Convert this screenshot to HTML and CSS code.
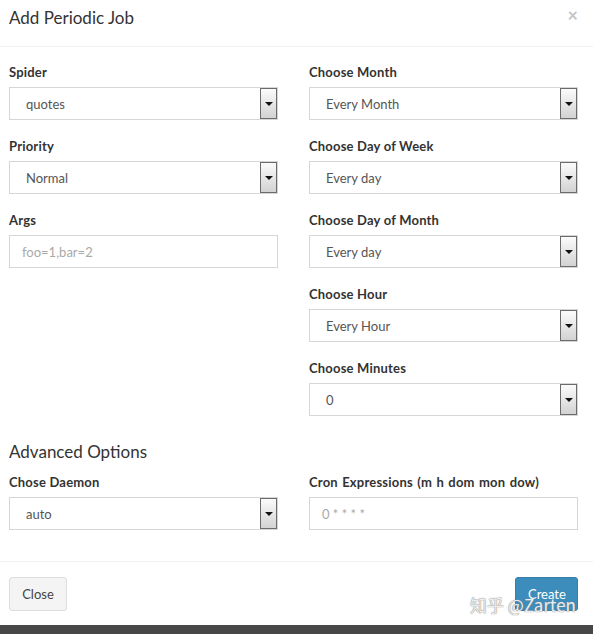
FILE: index.html
```html
<!DOCTYPE html>
<html>
<head>
<meta charset="utf-8">
<link rel="stylesheet" href="styles.css">
</head>
<body>
<div class="modal">
  <div class="modal-header">
    <h4 class="modal-title">Add Periodic Job</h4>
    <span class="close">×</span>
  </div>
  <div class="modal-body">
    <div class="cols">
      <div class="col">
        <div class="field">
          <label>Spider</label>
          <div class="select"><span class="val">quotes</span><span class="btn-arrow"><i></i></span></div>
        </div>
        <div class="field">
          <label>Priority</label>
          <div class="select"><span class="val">Normal</span><span class="btn-arrow"><i></i></span></div>
        </div>
        <div class="field">
          <label>Args</label>
          <div class="input"><span class="ph">foo=1,bar=2</span></div>
        </div>
      </div>
      <div class="col">
        <div class="field">
          <label>Choose Month</label>
          <div class="select"><span class="val">Every Month</span><span class="btn-arrow"><i></i></span></div>
        </div>
        <div class="field">
          <label>Choose Day of Week</label>
          <div class="select"><span class="val">Every day</span><span class="btn-arrow"><i></i></span></div>
        </div>
        <div class="field">
          <label>Choose Day of Month</label>
          <div class="select"><span class="val">Every day</span><span class="btn-arrow"><i></i></span></div>
        </div>
        <div class="field">
          <label>Choose Hour</label>
          <div class="select"><span class="val">Every Hour</span><span class="btn-arrow"><i></i></span></div>
        </div>
        <div class="field">
          <label>Choose Minutes</label>
          <div class="select"><span class="val">0</span><span class="btn-arrow"><i></i></span></div>
        </div>
      </div>
    </div>
    <h4 class="section">Advanced Options</h4>
    <div class="cols">
      <div class="col">
        <div class="field">
          <label>Chose Daemon</label>
          <div class="select"><span class="val">auto</span><span class="btn-arrow"><i></i></span></div>
        </div>
      </div>
      <div class="col">
        <div class="field">
          <label class="wide">Cron Expressions (m h dom mon dow)</label>
          <div class="input"><span class="ph">0 * * * *</span></div>
        </div>
      </div>
    </div>
  </div>
  <div class="modal-footer">
    <button class="btn btn-default">Close</button>
    <button class="btn btn-primary">Create</button>
  </div>
  <div class="bottom-bar"></div>
  <div class="watermark">知乎 @Zarten</div>
</div>
</body>
</html>
```
FILE: styles.css
```css
* { box-sizing: border-box; }
html, body { margin: 0; padding: 0; background: #fff; }
body {
  font-family: "Source Sans Pro", Lato, "Noto Sans CJK SC", sans-serif;
  color: #333;
  width: 593px;
  height: 634px;
  overflow: hidden;
}
.modal { position: relative; width: 593px; height: 634px; display: flex; flex-direction: column; }
.modal-header {
  height: 47px;
  border-bottom: 1px solid #f2f2f2;
  display: flex;
  align-items: flex-start;
  justify-content: space-between;
  padding: 6px 15px 0 9px;
}
.modal-title { margin: 0; font-size: 17px; font-weight: normal; line-height: 24px; color: #333; }
.close { font-size: 18px; color: #c4c4c4; line-height: 20px; margin-top: -1px; font-weight: bold; }
.modal-body { padding: 16px 15px 14px 9px; }
.cols { display: grid; grid-template-columns: 269px 269px; column-gap: 31px; }
.field { margin-bottom: 17px; }
.field label { display: block; font-weight: bold; font-size: 13px; line-height: 18px; margin-bottom: 6px; color: #333; letter-spacing: 0.2px; }
.field label.wide { word-spacing: 1px; }
.select, .input {
  height: 33px;
  border: 1px solid #d6d6d6;
  background: #fff;
  display: flex;
  align-items: stretch;
  font-size: 13px;
}
.select .val { flex: 1; padding-left: 16px; padding-top: 1px; line-height: 31px; color: #555; }
.btn-arrow {
  width: 17px;
  border: 1px solid #6b6b6b;
  background: linear-gradient(#fbfbfb, #d2d2d2);
  display: flex;
  align-items: center;
  justify-content: center;
}
.btn-arrow i {
  width: 0; height: 0;
  border-left: 4px solid transparent;
  border-right: 4px solid transparent;
  border-top: 4px solid #111;
}
.input .ph { padding-left: 12px; padding-top: 1px; line-height: 31px; color: #a9a9a9; }
.section { margin: 7px 0 9px; font-size: 17px; font-weight: normal; line-height: 24px; color: #333; }
.modal-footer {
  border-top: 1px solid #f2f2f2;
  padding: 15px 15px 0 9px;
  display: flex;
  justify-content: space-between;
  height: 64px;
}
.btn {
  height: 34px;
  font-family: inherit;
  font-size: 13px;
  border-radius: 3px;
  padding: 0 12px;
  border: 1px solid #ddd;
}
.btn-default { background: #f4f4f4; color: #444; width: 58px; }
.btn-primary { background: #3c8dbc; border-color: #367fa9; color: #fff; width: 63px; }
.bottom-bar { height: 9px; background: #474747; margin-top: auto; }
.watermark {
  position: absolute;
  left: 470px;
  top: 594px;
  font-size: 17px;
  line-height: 22px;
  color: rgba(255,255,255,0.85);
  text-shadow: 0 0 1px #8a8a8a, 0 0 1px #8a8a8a;
  font-family: "Noto Sans CJK SC", sans-serif;
}
```
